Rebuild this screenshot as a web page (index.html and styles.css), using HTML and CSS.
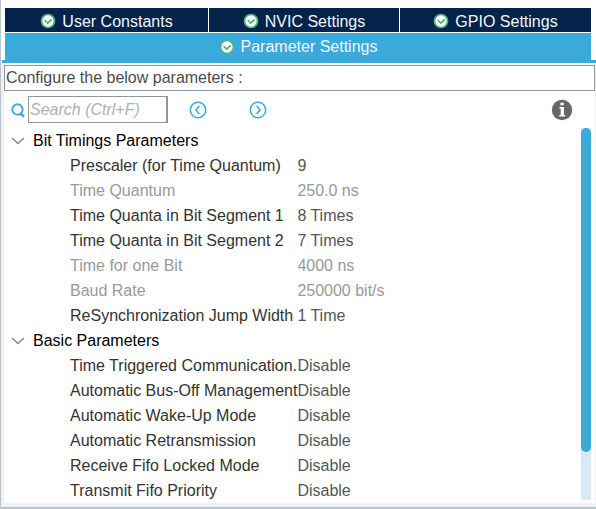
FILE: index.html
```
<!DOCTYPE html>
<html lang="en">
<head>
<meta charset="utf-8">
<title>Parameter Settings</title>
<link rel="stylesheet" href="styles.css">
</head>
<body>
<svg width="0" height="0" class="defs" aria-hidden="true">
  <symbol id="check" viewBox="0 0 16 16">
    <circle cx="8" cy="8" r="6.5" fill="#fff" stroke="#4fb477" stroke-width="1.7"/>
    <path d="M4.7 7l3 3.2 4-3.8" fill="none" stroke="#4bae72" stroke-width="1.6"/>
  </symbol>
  <symbol id="chevron" viewBox="0 0 14 8">
    <path d="M1 1l6 5.5L13 1" fill="none" stroke="#858585" stroke-width="1.4"/>
  </symbol>
</svg>
<main class="panel">
  <nav class="tabs">
    <div class="tab-row">
      <button class="tab" type="button"><svg class="check"><use href="#check"/></svg>User Constants</button>
      <button class="tab" type="button"><svg class="check"><use href="#check"/></svg>NVIC Settings</button>
      <button class="tab" type="button"><svg class="check"><use href="#check"/></svg>GPIO Settings</button>
    </div>
    <button class="tab active" type="button"><svg class="check"><use href="#check"/></svg>Parameter Settings</button>
  </nav>
  <div class="content">
    <p class="caption">Configure the below parameters :</p>
    <div class="toolbar">
      <label class="search-label" for="search" aria-label="Search">
        <svg width="16" height="16" viewBox="0 0 16 16" fill="none" stroke="#3aa9dc"><circle cx="7.5" cy="7.5" r="5.2" stroke-width="1.9"/><path d="M10.5 11.5l3.5 3.2" stroke-width="2.4"/></svg>
      </label>
      <input class="search" id="search" type="text" placeholder="Search (Ctrl+F)">
      <div class="steps">
        <button class="icon-button" type="button" aria-label="Previous">
          <svg width="18" height="18" viewBox="0 0 18 18" fill="none" stroke="#3aa9dc"><circle cx="9" cy="9" r="7.7" stroke-width="1.5"/><path d="M10.3 5L7 9l3.3 4" stroke-width="1.6"/></svg>
        </button>
        <button class="icon-button" type="button" aria-label="Next">
          <svg width="18" height="18" viewBox="0 0 18 18" fill="none" stroke="#3aa9dc"><circle cx="9" cy="9" r="7.7" stroke-width="1.5"/><path d="M7.7 5L11 9l-3.3 4" stroke-width="1.6"/></svg>
        </button>
      </div>
      <button class="icon-button info" type="button" aria-label="Information">
        <svg width="22" height="22" viewBox="0 0 22 22"><circle cx="11" cy="11" r="10.2" fill="#666"/><path d="M9.4 3.7h3.4v2.6H9.4zM8.4 8h4.5v8h1.3v1.5H8.3V16h1.4V9.5H8.4z" fill="#fff"/></svg>
      </button>
    </div>
    <div class="tree">
      <table class="params">
        <colgroup><col class="name-col"><col></colgroup>
        <tbody>
          <tr><th colspan="2"><button class="group" type="button"><svg class="chevron"><use href="#chevron"/></svg>Bit Timings Parameters</button></th></tr>
          <tr><td>Prescaler (for Time Quantum)</td><td>9</td></tr>
          <tr class="readonly"><td>Time Quantum</td><td>250.0 ns</td></tr>
          <tr><td>Time Quanta in Bit Segment 1</td><td>8 Times</td></tr>
          <tr><td>Time Quanta in Bit Segment 2</td><td>7 Times</td></tr>
          <tr class="readonly"><td>Time for one Bit</td><td>4000 ns</td></tr>
          <tr class="readonly"><td>Baud Rate</td><td>250000 bit/s</td></tr>
          <tr><td>ReSynchronization Jump Width</td><td>1 Time</td></tr>
        </tbody>
        <tbody>
          <tr><th colspan="2"><button class="group" type="button"><svg class="chevron"><use href="#chevron"/></svg>Basic Parameters</button></th></tr>
          <tr><td>Time Triggered Communication.</td><td>Disable</td></tr>
          <tr><td>Automatic Bus-Off Management</td><td>Disable</td></tr>
          <tr><td>Automatic Wake-Up Mode</td><td>Disable</td></tr>
          <tr><td>Automatic Retransmission</td><td>Disable</td></tr>
          <tr><td>Receive Fifo Locked Mode</td><td>Disable</td></tr>
          <tr><td>Transmit Fifo Priority</td><td>Disable</td></tr>
        </tbody>
      </table>
      <div class="scrollbar"><div class="thumb"></div></div>
    </div>
  </div>
</main>
</body>
</html>
```
FILE: styles.css
```
* {
  box-sizing: border-box;
}

body {
  margin: 0;
  background: #fff;
  font: 16px/25px "Liberation Sans", Arial, sans-serif;
  color: #333;
}

button {
  display: flex;
  align-items: center;
  padding: 0;
  border: 0;
  background: none;
  font: inherit;
  color: inherit;
}

.defs {
  position: absolute;
}

.panel {
  display: flex;
  flex-direction: column;
  min-height: 100vh;
  padding-top: 8px;
  border-left: 1px solid #b7c5cb;
  border-bottom: 2px solid #b7c5cb;
}

.tabs {
  display: flex;
  flex-direction: column;
  gap: 1px;
  margin-left: 1px;
  padding: 0 5px 0 3px;
  border-bottom: 3px solid #3aa9dc;
}

.tab-row {
  display: grid;
  grid-template-columns: 203fr 190fr 191fr;
  gap: 1px;
}

.tab {
  justify-content: center;
  gap: 6px;
  height: 24px;
  padding-top: 2px;
  background: #03234b;
  color: #f4f8fb;
}

.active {
  height: 27px;
  padding-top: 0;
  background: #3aa9dc;
}

.check {
  width: 16px;
  height: 16px;
}

.content {
  display: flex;
  flex: 1;
  flex-direction: column;
  padding-top: 2px;
  border: solid #eff1f4;
  border-width: 0 1px 4px 3px;
}

.caption {
  margin: 0;
  padding-left: 1px;
  border: 1px solid #8f979d;
  line-height: 24px;
  color: #4c4c4c;
}

.toolbar {
  display: flex;
  align-items: center;
  height: 37px;
  padding: 0 22px 0 6px;
}

.search-label {
  display: flex;
  width: 18px;
}

.search {
  width: 140px;
  height: 27px;
  padding: 0 1px;
  border: 1px solid #8f979d;
  border-right-width: 2px;
  font: inherit;
  font-style: italic;
}

.search::placeholder {
  color: #b0b0b0;
}

.steps {
  display: flex;
  gap: 42px;
  padding-left: 21px;
}

.info {
  margin-left: auto;
}

.tree {
  display: flex;
  flex: 1;
  align-items: flex-start;
  justify-content: space-between;
  padding-right: 4px;
}

.params {
  flex: 1;
  table-layout: fixed;
  border-collapse: collapse;
}

.name-col {
  width: 293px;
}

.params th,
.params td {
  height: 25px;
  padding: 0;
  font-weight: normal;
  text-align: left;
  white-space: nowrap;
}

.params td:first-child {
  padding-left: 66px;
}

.params td:last-child {
  color: #555;
}

.params .readonly td {
  color: #999;
}

.group {
  gap: 8px;
  padding-left: 7px;
  color: #000;
}

.chevron {
  width: 14px;
  height: 8px;
}

.scrollbar {
  align-self: stretch;
  width: 10px;
  margin-bottom: 3px;
  background: #d9e8f5;
}

.thumb {
  height: 87%;
  border-radius: 5px;
  background: #3aa9dc;
}
```
